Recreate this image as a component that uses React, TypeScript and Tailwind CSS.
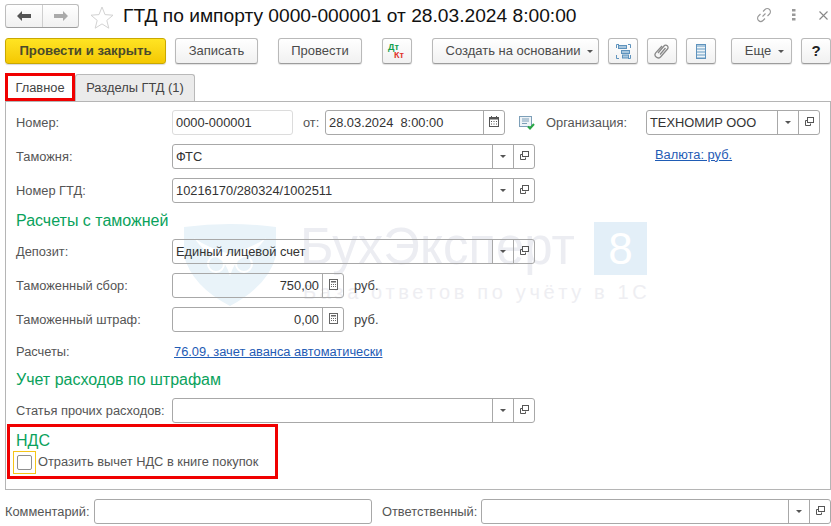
import React from "react";

const ToolBtn = ({ className, children }: { className: string; children: React.ReactNode }) => (
  <div
    className={`flex h-[26px] items-center justify-center rounded-[3px] border border-[#b9b9b9] border-b-[#9c9c9c] bg-gradient-to-b from-white to-[#f1f1f1] text-[13px] text-[#4b4b4b] shadow-[0_1px_1px_rgba(0,0,0,0.12)] ${className}`}
  >
    {children}
  </div>
);

const Caret = () => (
  <svg width="6" height="3" viewBox="0 0 6 3" className="shrink-0">
    <path d="M0 0h6L3 3z" fill="#555" />
  </svg>
);

const OpenIcon = () => (
  <svg width="9" height="9" viewBox="0 0 9 9" fill="none" stroke="#555" strokeWidth="1" className="mb-[2px] shrink-0">
    <rect x="2.500" y="0.500" width="6" height="5" fill="none" />
    <path d="M2 3.500H0.500v5h5V6.500" />
  </svg>
);

const CalendarIcon = () => (
  <svg width="10" height="11" viewBox="0 0 10 11" className="mb-[3px]">
    <rect x="0.500" y="1.500" width="9" height="9" fill="#fff" stroke="#555" />
    <rect x="0" y="1" width="10" height="2.500" fill="#555" />
    <rect x="2" y="0" width="1" height="2" fill="#555" />
    <rect x="7" y="0" width="1" height="2" fill="#555" />
    <path d="M2 5h1v1H2zM4.500 5h1v1h-1zM7 5h1v1H7zM2 7.500h1v1H2zM4.500 7.500h1v1h-1zM7 7.500h1v1H7z" fill="#555" />
  </svg>
);

const CalcIcon = () => (
  <svg width="9" height="11" viewBox="0 0 9 11" className="mb-[2px]">
    <rect x="0.500" y="0.500" width="8" height="10" fill="#fff" stroke="#666" />
    <rect x="2" y="2" width="5" height="1.500" fill="#666" />
    <path d="M2 5h1v1H2zM4 5h1v1H4zM6 5h1v1H6zM2 7h1v1H2zM4 7h1v1H4zM6 7h1v1H6z" fill="#666" />
  </svg>
);

// поле ввода с кнопками справа
const Field = ({
  value,
  className,
  right,
  buttons = [],
  light,
}: {
  value?: string;
  className: string;
  right?: boolean;
  buttons?: React.ReactNode[];
  light?: boolean;
}) => (
  <div
    className={`flex h-[25px] shrink-0 items-stretch rounded-[3px] border ${light ? "border-[#dcdcdc]" : "border-[#a8a8a8]"} ${className}`}
  >
    <div className={`flex min-w-0 flex-1 items-center overflow-hidden whitespace-pre px-[3px] text-[#333] ${right ? "justify-end" : ""}`}>
      {value}
    </div>
    {buttons.map((b, i) => (
      <div key={i} className="flex w-[21px] items-center justify-center border-l border-[#a8a8a8]">
        {b}
      </div>
    ))}
  </div>
);

const Label = ({ children, className = "w-[156px]" }: { children: React.ReactNode; className?: string }) => (
  <div className={`shrink-0 whitespace-nowrap text-[#555] ${className}`}>{children}</div>
);

const Row = ({ children, className = "" }: { children: React.ReactNode; className?: string }) => (
  <div className={`flex h-[25px] items-center ${className}`}>{children}</div>
);

const Heading = ({ children, className = "" }: { children: React.ReactNode; className?: string }) => (
  <div className={`text-[16px] leading-[20px] text-[#0aa25c] ${className}`}>{children}</div>
);

const selectButtons = [<Caret key="c" />, <OpenIcon key="o" />];

const Watermark = () => (
  <div className="pointer-events-none absolute left-[178px] top-[120px] h-[90px] w-[470px] select-none">
    <svg width="92" height="82" viewBox="0 0 92 82" className="absolute left-0 top-[2px]">
      <path d="M0 3Q46-3 92 3V32Q84 62 46 82 8 62 0 32z" fill="#e9f3f9" />
      <path d="M10 14Q22 30 34 34 42 38 46 52 50 38 58 34 70 30 82 14 68 24 46 30 24 24 10 14z" fill="#fff" />
      <circle cx="32" cy="40" r="8" fill="none" stroke="#fff" strokeWidth="2" />
      <circle cx="60" cy="40" r="8" fill="none" stroke="#fff" strokeWidth="2" />
    </svg>
    <div className="absolute left-[116px] top-[-4px] whitespace-nowrap text-[51px] leading-[58px] text-[#ecedf2]">БухЭксперт</div>
    <div className="absolute left-[119px] top-[58px] whitespace-nowrap text-[20px] leading-[24px] tracking-[3.65px] text-[#eeeef2]">База ответов по учёту в 1С</div>
    <div className="absolute left-[410px] top-0 flex h-[53px] w-[53px] items-center justify-center bg-[#e3eff8] text-[44px] leading-none text-white">8</div>
  </div>
);

export default function App() {
  return (
    <div className="relative h-[526px] w-[831px] overflow-hidden bg-white text-[12.85px] text-[#444] [font-family:'Liberation_Sans',Arial,sans-serif]">
      {/* шапка */}
      <div className="flex h-[38px] items-start pl-[5px] pt-[4px]">
        <div className="flex h-[24px] w-[74px] rounded-[3px] border border-[#bdbdbd] border-b-[#9c9c9c] bg-gradient-to-b from-white to-[#f1f1f1]">
          <div className="flex w-[37px] items-center justify-center border-r border-[#cfcfcf]">
            <svg width="14" height="10" viewBox="0 0 14 10"><path d="M0 5l5-5v3h9v4H5v3z" fill="#555" /></svg>
          </div>
          <div className="flex flex-1 items-center justify-center">
            <svg width="14" height="10" viewBox="0 0 14 10"><path d="M14 5L9 0v3H0v4h9v3z" fill="#aaa" /></svg>
          </div>
        </div>
        <svg width="24" height="23" viewBox="0 0 24 23" className="ml-[11px] mt-[2px]">
          <path d="M12 1l3 7.600 8 .6-6.200 5.200 2 7.800-6.800-4.300-6.800 4.300 2-7.800L1 9.200l8-.6z" fill="none" stroke="#d2d2d2" />
        </svg>
        <div className="ml-[9px] whitespace-nowrap text-[19.2px] leading-[24px] text-[#111]">ГТД по импорту 0000-000001 от 28.03.2024 8:00:00</div>
        <div className="ml-auto mr-[3px] mt-[3px] flex items-center">
          <svg width="16" height="16" viewBox="0 0 16 16" fill="none" stroke="#999" strokeWidth="1.100">
            <path d="M6.500 9.500l3-3M7 4.500l2-2a3 3 0 0 1 4.500 4.500l-2 2M9 11.500l-2 2A3 3 0 0 1 2.500 9l2-2" />
          </svg>
          <svg width="4" height="12" viewBox="0 0 4 12" className="ml-[20px]">
            <path d="M0 0h3.500v2.500H0zM0 4.500h3.500V7H0zM0 9h3.500v2.500H0z" fill="#999" />
          </svg>
          <svg width="9" height="9" viewBox="0 0 9 9" className="ml-[23px]" fill="none" stroke="#888" strokeWidth="1.100">
            <path d="M0.500 0.500l8 8M8.500 0.500l-8 8" />
          </svg>
        </div>
      </div>

      {/* командная панель */}
      <div className="flex h-[26px] pl-[5px]">
        <div className="flex h-[26px] w-[161px] items-center justify-center rounded-[3px] border border-[#c9a800] bg-gradient-to-b from-[#ffe422] to-[#f4c800] text-[13.2px] font-bold text-[#4a4a2a] shadow-[0_1px_1px_rgba(0,0,0,0.15)]">
          Провести и закрыть
        </div>
        <ToolBtn className="ml-[9px] w-[83px]">Записать</ToolBtn>
        <ToolBtn className="ml-[20px] w-[84px]">Провести</ToolBtn>
        <ToolBtn className="ml-[20px] w-[30px]">
          <div className="flex w-[18px] flex-col text-[9px] font-bold leading-[8px]">
            <span className="text-[#12a04c]">Дт</span>
            <span className="ml-[6px] text-[#e0332c]">Кт</span>
          </div>
        </ToolBtn>
        <ToolBtn className="ml-[20px] w-[167px] gap-[7px] pl-[8px]">
          Создать на основании <Caret />
        </ToolBtn>
        <ToolBtn className="ml-[9px] w-[30px]">
          <svg width="15" height="15" viewBox="0 0 15 15">
            <path d="M0.500 4V0.500H3M14.500 4V0.500H12M0.500 11v3.500H3M12 14.500h2.500V11" fill="none" stroke="#5f93bd" />
            <rect x="2.500" y="1.500" width="8" height="3" fill="#a9c7dd" stroke="#5f93bd" />
            <rect x="5.500" y="6.500" width="8" height="3" fill="#a9c7dd" stroke="#5f93bd" />
            <rect x="6.500" y="11" width="6" height="3" fill="#a9c7dd" stroke="#5f93bd" />
          </svg>
        </ToolBtn>
        <ToolBtn className="ml-[9px] w-[30px]">
          <svg width="16" height="16" viewBox="0 0 16 16" fill="none" stroke="#888" strokeWidth="1.300">
            <path d="M4 10l6-7a2.300 2.300 0 0 1 3.500 3l-7 8a3.200 3.200 0 0 1-4.800-4.200L8 3M6 11.500l5.500-6.500" />
          </svg>
        </ToolBtn>
        <ToolBtn className="ml-[9px] w-[30px]">
          <svg width="10" height="15" viewBox="0 0 10 15">
            <rect x="0.500" y="0.500" width="9" height="14" fill="#a9c7dd" stroke="#5f93bd" />
            <path d="M1 3.500h8M1 6.500h8M1 9.500h8M1 12.500h8" stroke="#eef4f8" strokeWidth="1" />
          </svg>
        </ToolBtn>
        <ToolBtn className="ml-[15px] w-[61px] gap-[7px] pl-[6px]">
          Еще <Caret />
        </ToolBtn>
        <ToolBtn className="ml-[9px] w-[30px] text-[15px] font-bold !text-[#222]">?</ToolBtn>
      </div>

      {/* вкладки */}
      <div className="ml-[5px] mt-[10px] flex h-[27px] items-end">
        <div className="flex h-[27px] w-[70px] items-center justify-center text-[#444]">Главное</div>
        <div className="flex h-[27px] w-[120px] items-center justify-center rounded-t-[3px] border border-b-0 border-[#b9b9b9] bg-[#ebebeb] text-[#444]">Разделы ГТД (1)</div>
      </div>

      {/* основная панель */}
      <div className="relative ml-[5px] h-[389px] w-[826px] border border-[#b5b5b5] pl-[10px] pt-[8px]">
        <Watermark />
        <div className="relative flex flex-col">
          <Row>
            <Label>Номер:</Label>
            <Field light value="0000-000001" className="w-[121px]" />
            <Label className="ml-[10px] w-[22px]">от:</Label>
            <Field value="28.03.2024  8:00:00" className="w-[180px]" buttons={[<CalendarIcon key="c" />]} />
            <svg width="16" height="14" viewBox="0 0 16 14" className="ml-[14px] mr-[11px] shrink-0">
              <rect x="0.500" y="0.500" width="12" height="10" fill="#eef3f7" stroke="#7d9fb8" />
              <path d="M3 3h7M3 5h7M3 7.500h5" stroke="#7d9fb8" />
              <path d="M9 10.500l2 2 4-4.500" fill="none" stroke="#29a745" strokeWidth="2" />
            </svg>
            <Label className="w-[100px]">Организация:</Label>
            <Field value="ТЕХНОМИР ООО" className="w-[174px]" buttons={selectButtons} />
          </Row>
          <Row className="mt-[9px]">
            <Label>Таможня:</Label>
            <Field value="ФТС" className="w-[363px]" buttons={selectButtons} />
            <a className="ml-[120px] mt-[-4px] whitespace-nowrap text-[#1f5cb5] underline">Валюта: руб.</a>
          </Row>
          <Row className="mt-[9px]">
            <Label>Номер ГТД:</Label>
            <Field value="10216170/280324/1002511" className="w-[363px]" buttons={selectButtons} />
          </Row>
          <Heading className="mt-[8px]">Расчеты с таможней</Heading>
          <Row className="mt-[8px]">
            <Label>Депозит:</Label>
            <Field value="Единый лицевой счет" className="w-[363px]" buttons={selectButtons} />
          </Row>
          <Row className="mt-[9px]">
            <Label>Таможенный сбор:</Label>
            <Field right value="750,00" className="w-[172px]" buttons={[<CalcIcon key="c" />]} />
            <span className="ml-[10px] text-[#444]">руб.</span>
          </Row>
          <Row className="mt-[9px]">
            <Label>Таможенный штраф:</Label>
            <Field right value="0,00" className="w-[172px]" buttons={[<CalcIcon key="c" />]} />
            <span className="ml-[10px] text-[#444]">руб.</span>
          </Row>
          <div className="mt-[10px] flex h-[20px] items-center">
            <Label>Расчеты:</Label>
            <a className="ml-[2px] whitespace-nowrap text-[#1f5cb5] underline">76.09, зачет аванса автоматически</a>
          </div>
          <Heading className="mt-[8px]">Учет расходов по штрафам</Heading>
          <Row className="mt-[8px]">
            <Label>Статья прочих расходов:</Label>
            <Field className="w-[363px]" buttons={selectButtons} />
          </Row>
          <Heading className="mt-[8px]">НДС</Heading>
          <div className="mt-[1px] flex h-[20px] items-center">
            <div className="ml-[-3px] flex h-[23px] w-[23px] shrink-0 items-center justify-center border border-[#f5c518]">
              <div className="h-[15px] w-[15px] rounded-[2px] border border-[#8f8f8f]" />
            </div>
            <span className="ml-[2px] whitespace-nowrap text-[#555]">Отразить вычет НДС в книге покупок</span>
          </div>
        </div>
      </div>

      {/* подвал */}
      <div className="ml-[5px] mt-[9px] flex items-center">
        <Label className="w-[89px]">Комментарий:</Label>
        <Field className="w-[278px]" />
        <Label className="ml-[10px] w-[99px]">Ответственный:</Label>
        <Field className="w-[350px]" buttons={selectButtons} />
      </div>

      {/* красные рамки */}
      <div className="pointer-events-none absolute left-[5px] top-[73px] h-[28px] w-[70px] border-[3px] border-[#f00000]" />
      <div className="pointer-events-none absolute left-[7px] top-[424px] h-[55px] w-[271px] border-[3px] border-[#f00000]" />
    </div>
  );
}
